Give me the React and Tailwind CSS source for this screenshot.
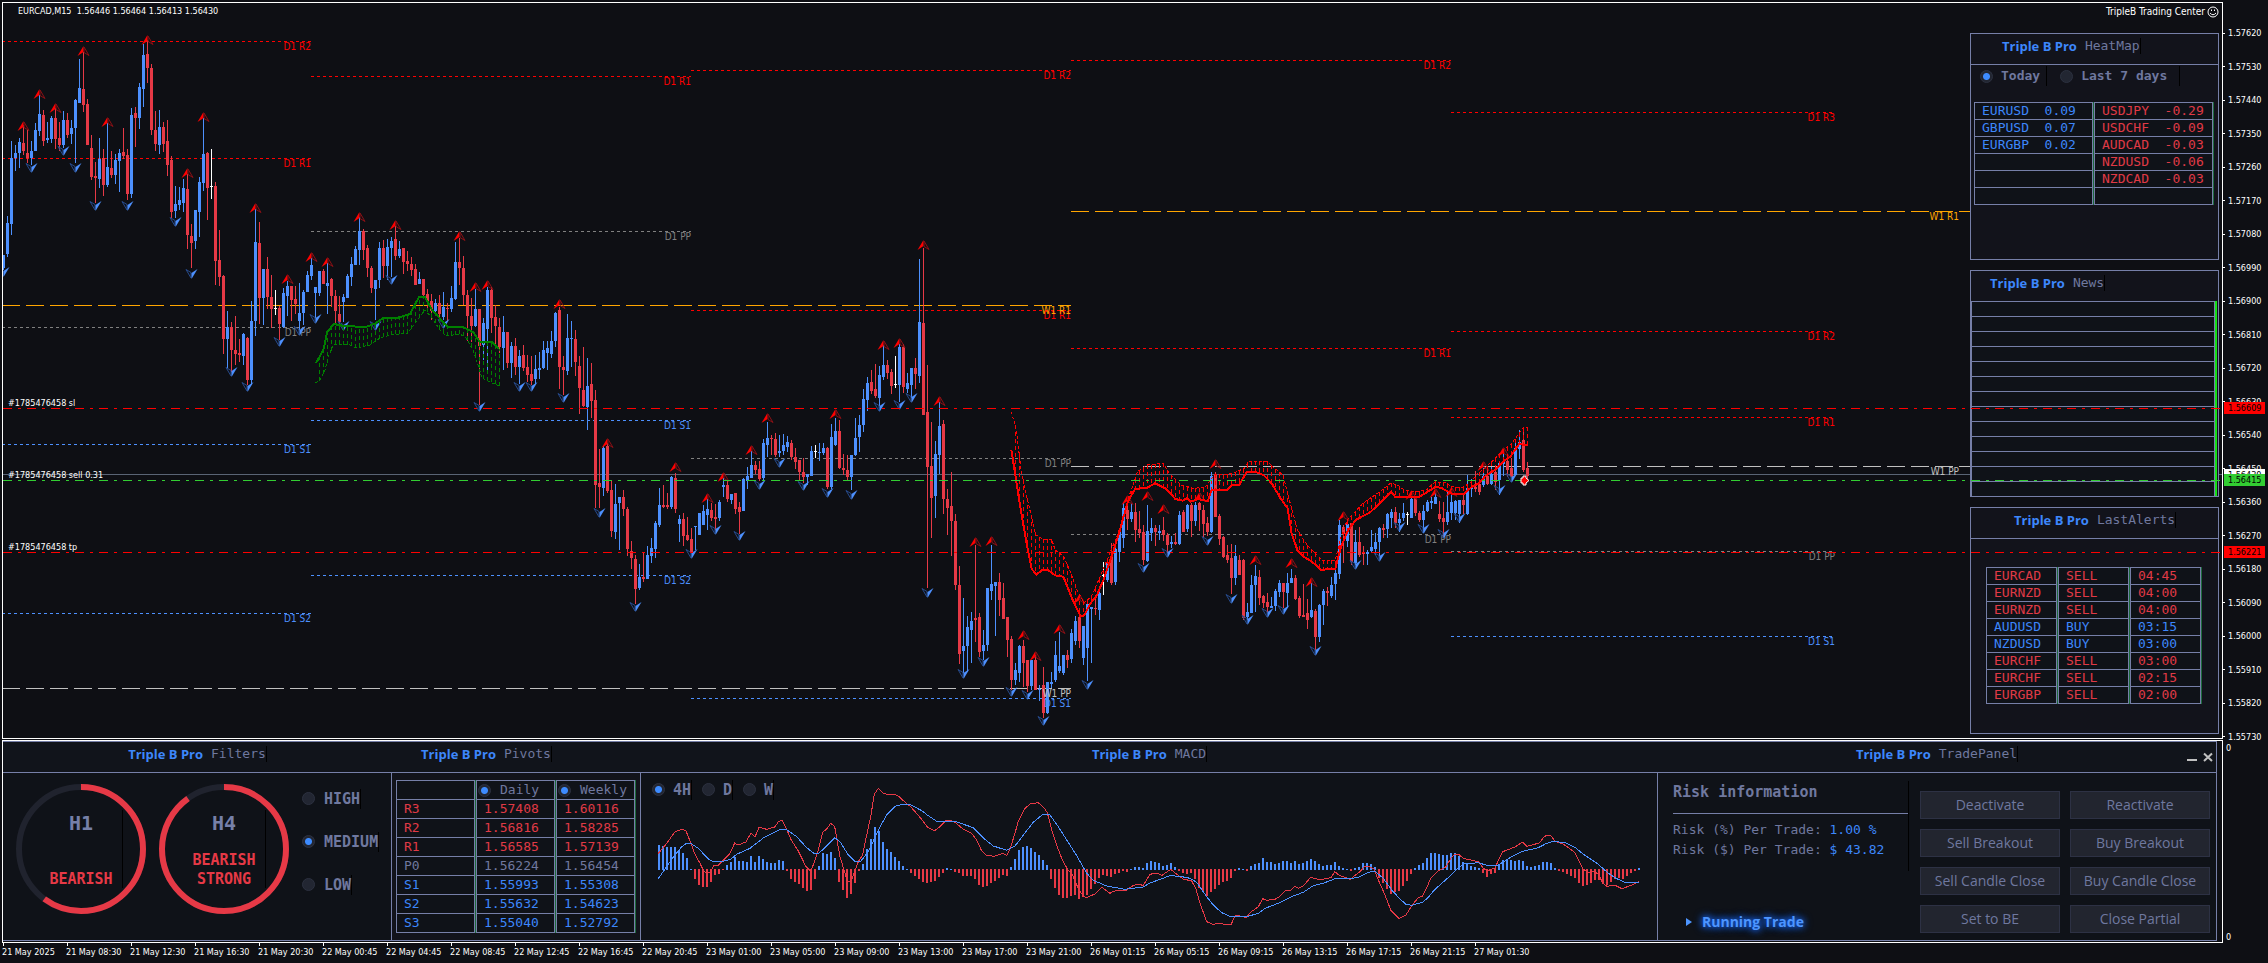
import React from "react";

const MONO = "font-['DejaVu_Sans_Mono',monospace]";
const TINY = "font-['DejaVu_Sans_Condensed','DejaVu_Sans',sans-serif] leading-3 text-white";

const BLUE = "#4d90fe";
const RED = "#e63946";

// direction, wick top, body top, body bottom, wick bottom
const CANDLES = `
u255,255,268,270 u216,223,254,257 u141,158,224,235 u145,153,158,171 u138,142,153,168 d125,143,151,155 d130,153,158,163 u141,151,158,165
u123,130,151,151 u95,114,131,136 d110,115,141,146 u122,138,140,143 u116,118,139,143 d108,118,139,149 d122,138,145,151 u111,120,145,148
d113,120,135,138 u120,128,134,144 u99,100,128,163 u59,88,103,103 d52,89,105,112 d99,104,145,145 d135,148,177,180 d162,176,178,203
u138,159,179,188 d149,158,185,196 u123,167,185,187 d151,168,175,178 u154,160,175,184 u149,153,161,192 d128,152,156,159 d149,155,194,200
u108,115,194,198 d107,113,118,147 u83,87,118,129 u44,55,89,107 d40,54,68,83 d64,68,130,135 d111,130,144,151 u110,127,145,154
d122,127,144,152 d120,141,165,176 d156,160,212,218 u186,204,211,218 u187,200,205,210 u179,188,203,212 d174,189,235,249 d224,236,243,268
u210,210,241,249 u177,182,212,237 u118,154,183,191 d152,153,188,220 w149,186,187,199 d182,186,261,285 d230,260,277,286 d275,276,339,354
u311,327,339,368 d322,327,350,372 d316,350,354,365 d339,353,355,362 u333,334,356,365 d337,338,380,385 u301,321,380,385 u209,242,321,336
d222,243,298,324 u269,269,298,325 d257,269,297,309 d275,297,309,328 w290,308,309,315 d306,308,324,340 u288,293,327,328 u281,286,296,316
d286,286,300,321 d286,299,304,314 u283,313,321,330 u290,292,313,325 u271,275,292,292 u258,265,276,280 u287,287,293,318 u271,271,293,296
d269,271,284,284 u263,283,286,314 d278,279,296,307 d290,296,311,323 d296,314,322,325 u294,297,302,322 u274,276,298,298 u257,264,277,286
u246,249,265,265 u217,231,250,265 d229,231,250,260 d245,248,268,277 d266,268,288,293 u280,280,289,320 u242,248,280,288 d240,248,266,278
u239,247,266,280 u237,241,248,277 d226,239,256,260 u241,249,256,258 d248,248,262,274 d251,261,264,271 d257,264,270,276 d264,269,285,285
u272,279,284,284 d279,279,295,296 d289,294,301,310 d294,301,311,320 u299,303,311,315 d295,303,314,321 u292,307,317,320 d303,308,309,321
u286,298,309,312 u242,262,299,300 d238,262,268,285 d256,268,295,305 d290,295,316,341 d298,316,326,342 u289,309,326,327 d309,309,346,405
u318,323,345,360 u287,290,329,370 d287,290,318,333 d305,317,326,347 d318,327,347,353 u316,332,348,370 d332,332,363,368 u342,346,363,378
d338,346,367,375 u350,356,367,384 d345,355,368,371 d355,367,375,382 d356,374,381,385 u355,369,379,384 u352,368,370,379 u341,350,368,369
u341,348,353,370 u331,341,354,358 u312,313,341,347 d307,310,367,389 d356,367,370,395 u314,338,371,375 u321,338,339,367 d330,339,362,376
d356,366,388,414 d347,390,406,407 u358,386,407,430 d363,384,401,418 d390,400,485,508 d449,483,487,508 u446,448,488,496 d443,446,491,493
d481,490,531,537 u484,504,532,539 u497,497,503,550 d490,497,509,516 d507,509,549,556 d541,551,558,569 d555,559,589,604 u564,577,588,590
d552,577,579,582 u546,555,579,579 u538,548,556,563 u521,523,549,558 u488,505,525,527 d485,505,507,508 d493,505,507,509 u476,477,507,509
d473,478,509,513 u515,519,524,542 d513,519,536,546 d517,535,540,541 d528,539,552,553 u526,526,527,550 u513,513,535,535 u505,511,525,525
u499,509,515,530 d503,510,518,521 d504,517,519,530 u500,502,518,521 u478,485,487,497 d480,485,499,502 u494,494,500,504 d493,493,509,514
d502,507,512,534 u478,479,511,511 u467,476,481,489 u451,465,478,478 d461,465,470,474 d461,469,479,481 u439,443,478,480 u422,438,445,457
d435,438,439,455 d433,439,455,457 u435,451,453,457 u434,445,451,455 u436,442,447,452 d440,443,457,460 d448,457,462,469 d460,460,472,480
d458,472,477,483 u474,474,477,485 u446,451,476,476 w445,451,452,458 u443,452,453,461 u443,448,453,455 d447,448,487,489 u424,437,487,489
u418,431,445,446 d420,431,468,469 d454,468,470,475 d455,470,477,480 u455,455,477,490 u418,438,455,456 u415,425,437,452 u389,399,425,432
u377,383,400,411 d370,382,391,394 d364,389,396,398 u366,375,398,406 u345,365,377,380 d360,365,373,379 d369,372,386,394 w356,384,385,388
u344,347,385,402 d344,347,387,393 u373,383,389,393 u368,368,385,398 d358,368,374,389 u259,322,376,383 d248,323,415,415 d365,412,467,588
d422,466,498,538 u441,454,496,518 u402,426,455,474 d420,424,499,514 d489,499,508,535 d472,506,521,556 d514,521,585,590 d566,585,654,664
u598,646,651,673 u616,627,646,672 u612,621,630,663 d545,618,620,642 d613,617,652,657 u630,645,651,660 u588,588,645,651 u545,584,591,600
u582,582,586,636 d573,582,600,616 d583,598,619,619 d617,617,640,657 d636,639,680,690 u663,670,680,685 u645,646,673,682 d640,646,663,687
d660,660,686,692 u660,660,686,690 d655,660,690,690 u685,689,690,701 d667,685,713,718 u682,682,713,714 u672,682,684,688 u641,655,680,682
u632,666,671,673 u655,655,673,675 d650,655,660,668 u629,633,659,663 u616,621,641,645 d612,617,641,648 u626,626,658,665 u600,604,648,681
u607,607,609,663 d595,608,609,615 u590,593,610,620 w562,575,576,595 u560,562,580,582 d543,557,583,585 u543,549,582,585 u530,531,552,562
u503,508,538,548 d505,510,519,530 u503,512,519,522 d503,512,530,542 d511,529,533,538 d525,532,560,565 u505,531,561,562 u518,528,533,541
d525,528,532,546 u525,531,533,540 d517,530,535,541 d533,535,545,553 u536,542,544,548 d533,542,544,545 u511,515,544,545 d510,512,532,532
u504,505,529,532 d503,505,521,537 u502,505,521,526 d502,503,510,531 d505,510,524,538 d517,523,532,536 u472,476,532,533 d472,475,517,517
d514,516,539,545 d536,537,557,558 d545,555,560,563 d544,558,578,594 u545,556,578,585 d555,560,575,575 d559,560,618,620 u603,612,617,620
u575,585,613,613 u565,576,585,612 d570,577,598,605 d595,596,603,608 d593,602,607,612 u597,606,608,608 u589,591,606,611 u580,583,592,597
d583,583,592,608 u573,583,593,608 u569,578,583,583 d575,578,599,600 d596,598,616,618 d584,615,617,617 d599,613,620,629 u583,610,617,618
d609,611,637,650 u604,605,637,642 u589,591,605,625 d587,591,593,606 u577,585,596,598 u570,573,584,600 u520,525,574,579 d525,527,534,563
u520,524,541,547 d523,523,562,565 u530,542,563,565 d527,542,555,557 d546,553,554,565 u550,552,554,565 u530,547,551,552 u533,542,549,555
u527,528,542,556 d524,528,530,538 u513,514,529,538 u509,512,518,528 d507,512,523,528 u513,519,523,532 u503,513,518,521 w512,514,515,525
u497,499,518,518 d496,497,513,516 d511,513,520,522 u505,511,520,533 u500,502,511,512 u497,501,503,509 u493,497,504,504 d501,514,519,522
d502,518,522,537 u492,512,522,525 u495,502,513,520 u500,501,513,520 u500,500,514,523 d495,500,505,514 u475,488,514,515 u479,488,489,497
d471,487,489,492 d480,484,492,495 u468,476,485,487 d470,476,484,485 u467,474,484,485 d465,472,482,490 u462,463,480,495 u453,462,464,476
d455,461,470,477 d458,468,477,477 u442,448,475,475 u430,442,449,459 d431,440,470,472 d462,468,476,480`
  .trim()
  .split(/\s+/)
  .map((c) => [c[0], ...c.slice(1).split(",").map(Number)]);

// candle index, tip of the marker
const HIGHS = [
  [5, 121], [9, 89], [13, 103], [20, 46], [26, 117], [36, 35], [46, 168], [50, 112], [63, 203], [71, 274], [77, 252], [81, 257],
  [89, 212], [98, 220], [114, 231], [118, 282], [121, 280], [139, 299], [151, 438], [168, 462], [176, 493], [180, 472], [187, 445],
  [191, 413], [208, 409], [220, 340], [224, 338], [230, 240], [234, 396], [243, 537], [247, 536], [255, 630], [258, 651], [264, 624],
  [269, 594], [281, 495], [286, 491], [290, 504], [299, 492], [303, 459], [313, 555], [322, 558], [327, 577], [335, 511], [352, 490],
  [358, 488], [362, 487], [370, 461], [375, 447],
];
const LOWS = [
  [0, 277], [7, 173], [15, 156], [18, 173], [23, 211], [31, 211], [43, 227], [47, 279], [57, 377], [61, 392], [69, 347], [74, 336],
  [78, 324], [85, 331], [93, 331], [97, 285], [110, 329], [119, 412], [129, 392], [132, 392], [140, 403], [149, 518], [158, 612],
  [172, 559], [178, 535], [184, 541], [189, 490], [194, 468], [200, 491], [206, 498], [212, 500], [219, 412], [224, 410], [227, 403],
  [231, 598], [240, 679], [245, 667], [252, 697], [256, 700], [260, 726], [271, 690], [285, 573], [291, 558], [301, 546], [307, 604],
  [311, 625], [316, 618], [320, 615], [328, 656], [338, 570], [344, 562], [349, 532], [355, 534], [360, 539], [364, 523], [374, 495],
  [377, 483],
];

const pairs = (s) => s.trim().split(/\s+/).map((p) => p.split(",").map(Number));
const place = (s, ox, oy, kx) => pairs(s).map(([x, y]) => [ox + x / kx, oy + y / 3]);
const toPoints = (pts) => pts.map(([x, y]) => `${x.toFixed(1)},${y.toFixed(1)}`).join(" ");
const valueAt = (pts, x) => {
  for (let i = 1; i < pts.length; i++) {
    const [x0, y0] = pts[i - 1];
    const [x1, y1] = pts[i];
    if (x >= x0 && x <= x1) return y0 + ((y1 - y0) * (x - x0)) / (x1 - x0 || 1);
  }
  return null;
};

const GREEN_LINE = pairs("316,363 320,356 324,348 327,332 334,324 344,326 366,327 376,323 383,318 397,318 410,314 419,297 425,297 432,310 448,327 463,327 473,332 480,342 492,342 499,349");
const GREEN_EDGE = pairs("315,383 320,380 325,370 329,355 334,344 350,345 356,348 370,345 380,338 390,335 408,333 419,318 425,310 432,318 440,330 446,336 460,334 466,338 473,350 478,365 482,378 490,382 499,386");
const RED_LINE = [
  ...place("725,150 732,215 742,310 755,420 767,508 777,523 790,509 800,510 815,526 832,530 850,595 868,650 876,645 888,610 900,590 915,540 935,455 950,385 965,305 980,267 1005,263 1021,250 1045,267 1063,297 1078,302 1088,294 1095,305 1110,297 1130,303 1138,270 1170,270 1180,256 1195,254 1210,217 1228,215 1245,225 1262,250 1280,295 1295,325 1303,400 1315,450 1330,472 1345,485 1363,509 1393,507 1405,440 1418,395 1435,360 1465,337 1485,310 1507,277", 660, 400, 2.063),
  ...place("211,577 220,591 275,590 295,575 312,561 325,563 350,581 378,582 395,562 412,550 430,525 450,510 470,483 485,470 505,433 526,435", 1300, 300, 2.306),
];
const RED_EDGE = [
  ...place("725,35 735,90 745,210 755,280 775,405 790,418 808,418 815,450 832,468 845,510 862,575 875,608 890,590 905,540 925,470 945,400 965,300 985,215 1005,195 1038,190 1050,220 1075,255 1100,265 1125,262 1145,222 1165,225 1190,215 1205,205 1215,184 1252,184 1268,205 1285,225 1300,310 1315,390 1335,435 1365,480 1393,482 1405,410 1418,360 1450,310 1490,270 1507,250", 660, 400, 2.063),
  ...place("212,550 225,555 240,570 262,575 290,570 312,545 335,548 350,560 375,563 395,545 410,520 430,500 450,475 468,450 487,433 505,400 515,382 526,382", 1300, 300, 2.306),
];

const R = "#ff0000";
const G = "#808080";
const B = "#4d90fe";
// x start, x end, y, colour, label
const DAILY = [
  [2, 311, 41, R, "D1 R2"], [2, 311, 158, R, "D1 R1"], [2, 311, 327, G, "D1 PP"], [2, 311, 444, B, "D1 S1"], [2, 311, 613, B, "D1 S2"],
  [311, 691, 76, R, "D1 R1"], [311, 691, 231, G, "D1 PP"], [311, 691, 420, B, "D1 S1"], [311, 691, 575, B, "D1 S2"],
  [691, 1071, 70, R, "D1 R2"], [691, 1071, 310, R, "D1 R1"], [691, 1071, 458, G, "D1 PP"], [691, 1071, 698, B, "D1 S1"],
  [1071, 1451, 60, R, "D1 R2"], [1071, 1451, 348, R, "D1 R1"], [1071, 1451, 534, G, "D1 PP"],
  [1451, 1835, 112, R, "D1 R3"], [1451, 1835, 331, R, "D1 R2"], [1451, 1835, 417, R, "D1 R1"], [1451, 1835, 551, G, "D1 PP"], [1451, 1835, 636, B, "D1 S1"],
];
const WEEKLY = [
  [2, 1071, 305, "#ffa500", "W1 R1", 1071], [2, 1071, 688, "#c0c0c0", "W1 PP", 1071],
  [1071, 1970, 211, "#ffa500", "W1 R1", 1959], [1071, 1970, 466, "#c0c0c0", "W1 PP", 1959],
];
const ORDERS = [
  [408, "#ff0000", "#1785476458 sl"], [480, "#32cd32", "#1785476458 sell 0.31"], [552, "#ff0000", "#1785476458 tp"],
];
const CONDENSED = "'DejaVu Sans Condensed','DejaVu Sans',sans-serif";

function Cloud({ line, edge, color }) {
  const bars = [];
  for (let x = 3; x < 1530; x += 4) {
    const a = valueAt(line, x);
    const b = valueAt(edge, x);
    if (a !== null && b !== null) bars.push([x, Math.round(a), Math.round(b)]);
  }
  return (
    <g stroke={color} fill="none">
      {bars.map(([x, a, b]) => (
        <line key={x} x1={x + 0.5} x2={x + 0.5} y1={b} y2={a} strokeDasharray="4 3" />
      ))}
      <polyline points={toPoints(edge)} strokeDasharray="3 2" />
      <polyline points={toPoints(line)} strokeWidth="2" />
    </g>
  );
}

function PriceChart() {
  return (
    <svg viewBox="3 3 2219 735" className="col-start-1 row-start-1 block w-full" role="img" aria-label="EURCAD M15 candles">
      <g shapeRendering="crispEdges">
        <line x1="3" x2="2222" y1="474.5" y2="474.5" stroke="#5a6475" />
        {DAILY.map(([a, b, y, c], i) => (
          <line key={i} x1={a} x2={b} y1={y + 0.5} y2={y + 0.5} stroke={c} strokeDasharray="3 3" />
        ))}
        {WEEKLY.map(([a, b, y, c], i) => (
          <line key={i} x1={a} x2={b} y1={y + 0.5} y2={y + 0.5} stroke={c} strokeDasharray="18 6" />
        ))}
      </g>
      <g shapeRendering="crispEdges">
        {CANDLES.map(([d, wt, bt, bb, wb], i) => {
          const x = 3 + 4 * i;
          const fill = d === "u" ? BLUE : d === "d" ? RED : "#ffffff";
          return (
            <g key={i} fill={fill}>
              <rect x={x} y={wt} width="1" height={Math.max(1, wb - wt)} />
              <rect x={x - 1} y={bt} width="3" height={Math.max(1, bb - bt)} />
            </g>
          );
        })}
      </g>
      <g fontFamily={CONDENSED} fontSize="10" textAnchor="end">
        {DAILY.map(([, b, y, c, t], i) => (
          <text key={i} x={b} y={y + 9} fill={c}>{t}</text>
        ))}
        {WEEKLY.map(([, , y, c, t, x], i) => (
          <text key={i} x={x} y={y + 9} fill={c}>{t}</text>
        ))}
      </g>
      {HIGHS.map(([i, y]) => (
        <g key={i} transform={`translate(${3.5 + 4 * i} ${y})`}>
          <path d="M0 0 L-6 10 L0 6 Z" fill="#ff0000" />
          <path d="M0.5 1 L5.5 9.5 L0.5 6.5 Z" fill="none" stroke="#8b1015" />
        </g>
      ))}
      {LOWS.map(([i, y]) => (
        <g key={i} transform={`translate(${3.5 + 4 * i} ${y})`}>
          <path d="M-0.5 -1 L-5.5 -9.5 L-0.5 -6.5 Z" fill="none" stroke="#264a8c" />
          <path d="M0 0 L6 -10 L0 -6 Z" fill={BLUE} />
        </g>
      ))}
      <g shapeRendering="crispEdges">
        <Cloud line={GREEN_LINE} edge={GREEN_EDGE} color="#008000" />
        <Cloud line={RED_LINE} edge={RED_EDGE} color="#ff0000" />
      </g>
      <text x="18" y="14" fill="#fff" fontFamily={CONDENSED} fontSize="9" xmlSpace="preserve">EURCAD,M15  1.56446 1.56464 1.56413 1.56430</text>
    </svg>
  );
}

function OrderLines() {
  return (
    <svg viewBox="3 3 2219 735" className="pointer-events-none col-start-1 row-start-1 block w-full" role="img" aria-label="Open order levels">
      {ORDERS.map(([y, c, t]) => (
        <g key={t}>
          <line x1="3" x2="2222" y1={y + 0.5} y2={y + 0.5} stroke={c} strokeDasharray="9 6 3 6" shapeRendering="crispEdges" />
          <text x="8" y={y - 2} fill="#fff" fontFamily={CONDENSED} fontSize="9">{t}</text>
        </g>
      ))}
      <path d="M1523 476 h3 v2 l3 2.500 l-3 2.500 v2 h-3 v-2 h-2 v-5 h2 z" fill="#ff0000" stroke="#fff" />
    </svg>
  );
}

function Title({ name, className = "" }) {
  return (
    <h2 className={`flex h-[30px] items-center pb-1.5 ${className}`}>
      <span className="mr-2 font-['Open_Sans',sans-serif] text-[13px] leading-4 font-bold text-[#3d87fb]">Triple B Pro</span>
      <span className={`${MONO} border-r border-black text-[13px] leading-4 text-[#6f789f]`}>{name}</span>
    </h2>
  );
}

function Dot({ label, labelClass, className = "", ...rest }) {
  return (
    <label className={`flex items-center ${MONO} text-[#6f789f] ${className}`}>
      <input
        {...rest}
        className="size-[13px] shrink-0 appearance-none rounded-full border border-[#2c3140] bg-[#222632] checked:bg-[radial-gradient(circle,#3d8bff_3px,#222632_4px)]"
      />
      <span className={labelClass}>{label}</span>
    </label>
  );
}

const CELL = "border-x border-b border-[#767fa8] p-0 text-left font-normal shadow-[1px_0_0_0_#1d6a3c] whitespace-pre";

function HeatMap() {
  const left = [["EURUSD", "0.09"], ["GBPUSD", "0.07"], ["EURGBP", "0.02"]];
  const right = [["USDJPY", "-0.29"], ["USDCHF", "-0.09"], ["AUDCAD", "-0.03"], ["NZDUSD", "-0.06"], ["NZDCAD", "-0.03"]];
  return (
    <section className="h-[227px] border border-[#767fa8] bg-[#12131b]">
      <Title name="HeatMap" className="pl-[31px]" />
      <div className="flex border-t border-[#767fa8] pt-px pl-[9px]">
        <Dot type="radio" name="heat" defaultChecked label="Today" labelClass="ml-2 border-r border-black pr-1.5 leading-5" className="text-[13px] font-bold" />
        <Dot type="radio" name="heat" label="Last 7 days" labelClass="ml-2 border-r border-black pr-3 leading-5" className="ml-[13px] text-[13px] font-bold" />
      </div>
      <table className={`mt-4 ml-[2px] table-fixed border-separate border-spacing-x-px border-spacing-y-0 bg-[#0f1218] ${MONO} text-[13px] leading-4`} aria-label="Strength">
        <tbody>
          {[0, 1, 2, 3, 4, 5].map((r) => (
            <tr key={r} className="h-[17px]">
              <td className={`${CELL} w-[119px] pl-[7px] text-[#3d87fb] ${r === 0 ? "border-t" : ""}`}>{left[r] ? `${left[r][0]}  ${left[r][1]}` : ""}</td>
              <td className={`${CELL} w-[119px] pl-[7px] text-[#e03a46] ${r === 0 ? "border-t" : ""}`}>{right[r] ? `${right[r][0]}  ${right[r][1]}` : ""}</td>
            </tr>
          ))}
        </tbody>
      </table>
    </section>
  );
}

function News() {
  return (
    <section className="h-[227px] border border-[#767fa8] bg-[#12131b]">
      <Title name="News" className="pl-[19px]" />
      <div className="pr-px">
        <div className="border-r-2 border-[#19e019]">
          <table className="w-full border-separate border-spacing-0 border-l border-[#767fa8] bg-[#0f1218]" aria-label="News">
            <tbody>
              {Array.from({ length: 13 }, (_, i) => (
                <tr key={i}>
                  <td className="h-[15px] border-t border-r border-[#767fa8] p-0" />
                </tr>
              ))}
            </tbody>
          </table>
        </div>
      </div>
    </section>
  );
}

function LastAlerts() {
  const rows = [
    ["EURCAD", "SELL", "04:45"], ["EURNZD", "SELL", "04:00"], ["EURNZD", "SELL", "04:00"], ["AUDUSD", "BUY", "03:15"],
    ["NZDUSD", "BUY", "03:00"], ["EURCHF", "SELL", "03:00"], ["EURCHF", "SELL", "02:15"], ["EURGBP", "SELL", "02:00"],
  ];
  return (
    <section className="h-[227px] border border-[#767fa8] bg-[#12131b]">
      <Title name="LastAlerts" className="pl-[43px]" />
      <div className="border-t border-[#767fa8] pt-7 pl-[14px]">
        <table className={`table-fixed border-separate border-spacing-x-px border-spacing-y-0 bg-[#0f1218] ${MONO} text-[13px] leading-4`} aria-label="Last alerts">
          <tbody>
            {rows.map((r, i) => (
              <tr key={i} className={r[1] === "BUY" ? "h-[17px] text-[#3d87fb]" : "h-[17px] text-[#e03a46]"}>
                {r.map((c, k) => (
                  <td key={k} className={`${CELL} w-[71px] pl-[7px] ${i === 0 ? "border-t" : ""}`}>{c}</td>
                ))}
              </tr>
            ))}
          </tbody>
        </table>
      </div>
    </section>
  );
}

const PRICES = Array.from({ length: 22 }, (_, i) => ((157620 - 90 * i) / 100000).toFixed(5));

function PriceAxis() {
  return (
    <div className={`relative -mb-1 flex w-[45px] shrink-0 flex-col justify-between pt-[25px] text-[9px] ${TINY}`}>
      {PRICES.map((p) => (
        <div key={p} className="flex h-3 items-center gap-[3px]">
          <span className="h-px w-[2px] bg-white" />
          {p}
        </div>
      ))}
      <span className="absolute top-[467px] left-px h-3 w-[41px] bg-white pl-1 text-black">1.56430</span>
      <span className="absolute top-[400px] left-px h-3 w-[41px] bg-[#ff0000] pl-1 text-black">1.56609</span>
      <span className="absolute top-[472px] left-px h-3 w-[41px] bg-[#32cd32] pl-1 text-black">1.56415</span>
      <span className="absolute top-[544px] left-px h-3 w-[41px] bg-[#ff0000] pl-1 text-black">1.56221</span>
    </div>
  );
}

function Ring({ frame, lines, share }) {
  const c = 2 * Math.PI * 62;
  return (
    <svg viewBox="0 0 130 130" className="size-[130px] shrink-0" role="img" aria-label={`${frame} ${lines.join(" ")}`}>
      <circle cx="65" cy="65" r="62" fill="none" stroke="#20232e" strokeWidth="6" />
      <circle cx="65" cy="65" r="62" fill="none" stroke={RED} strokeWidth="6" strokeDasharray={`${c * share} ${c}`} transform="rotate(-90 65 65)" />
      <rect x="106" y="26" width="1" height="78" fill="#000" />
      <g textAnchor="middle" fontWeight="700" fontFamily="'DejaVu Sans Mono',monospace">
        <text x="65" y="46" fontSize="20" fill="#7680a8">{frame}</text>
        {lines.map((t, i) => (
          <text key={t} x="65" y={100 - 19 * (lines.length - 1 - i)} fontSize="15" fill={RED}>{t}</text>
        ))}
      </g>
    </svg>
  );
}

function Filters() {
  return (
    <div className="flex gap-[13px] border-r border-[#767fa8] bg-[#0f1218] pl-[13px]">
      <div className="flex gap-[13px] pt-[11px]">
        <Ring frame="H1" lines={["BEARISH"]} share={0.6} />
        <Ring frame="H4" lines={["BEARISH", "STRONG"]} share={0.9} />
      </div>
      <div className="flex flex-col items-start pt-1">
        {["HIGH", "MEDIUM", "LOW"].map((t) => (
          <Dot key={t} type="radio" name="filter" defaultChecked={t === "MEDIUM"} label={t} labelClass="ml-[9px] border-r border-black leading-5" className="h-[43px] text-[15px] font-bold" />
        ))}
      </div>
    </div>
  );
}

const PIVOTS = [
  ["R3", "1.57408", "1.60116"], ["R2", "1.56816", "1.58285"], ["R1", "1.56585", "1.57139"], ["P0", "1.56224", "1.56454"],
  ["S1", "1.55993", "1.55308"], ["S2", "1.55632", "1.54623"], ["S3", "1.55040", "1.52792"],
];

function Pivots() {
  return (
    <div className="border-r border-[#767fa8] bg-[#12131b] pt-[7px] pl-[3px]">
      <table className={`table-fixed border-separate border-spacing-x-px border-spacing-y-0 bg-[#0f1218] ${MONO} text-[13px] leading-[18px]`}>
        <thead>
          <tr className="h-[19px]">
            <th className={`${CELL} w-[79px] border-t`} />
            {["Daily", "Weekly"].map((t) => (
              <th key={t} className={`${CELL} w-[79px] border-t`}>
                <Dot type="checkbox" defaultChecked label={t} labelClass="ml-[9px]" className="pl-px" />
              </th>
            ))}
          </tr>
        </thead>
        <tbody>
          {PIVOTS.map((r) => (
            <tr key={r[0]} className={r[0][0] === "R" ? "h-[19px] text-[#e03a46]" : r[0][0] === "S" ? "h-[19px] text-[#3d87fb]" : "h-[19px] text-[#6f789f]"}>
              {r.map((c, i) => (
                <td key={i} className={`${CELL} pl-[7px]`}>{c}</td>
              ))}
            </tr>
          ))}
        </tbody>
      </table>
    </div>
  );
}

// histogram bar ends in thirds of a pixel; the zero line is at 404
const HIST = `330 333 336 336 336 345 354 369 402 432 450 456 456 441 420 417 404 390 381 366 378 378 381 363 381 363 372 381 384 384 375 378
408 432 441 447 459 468 465 432 393 354 357 351 369 441 465 489 477 444 408 387 342 312 276 288 321 342 351 366 378 393 402 414 423 432 441
444 441 438 426 414 399 402 411 414 423 423 423 432 450 456 453 444 438 429 420 423 396 372 345 336 333 339 351 360 375 390 432 459 480 489
489 483 480 492 486 480 462 447 429 420 423 426 417 414 408 411 402 396 396 399 384 378 381 384 393 390 384 396 408 414 417 414 432 459 468
483 471 462 450 441 438 429 408 399 402 408 393 387 384 369 381 381 387 384 378 378 384 378 387 384 378 372 378 387 393 390 390 381 393 399
402 408 399 396 384 384 387 396 429 444 462 477 471 468 453 438 417 399 390 384 369 354 354 357 360 360 354 354 363 381 384 393 396 399 414
426 417 414 387 375 375 375 378 375 378 393 396 393 390 381 381 384 399 408 411 417 423 429 444 453 450 444 435 435 447 450 441 432 429 432
423 414 408 399`.trim().split(/\s+/).map(Number);

const MACD_LINE = "54,356 78,328 105,290 126,283 138,288 150,318 165,358 180,385 190,406 200,416 212,410 222,391 234,391 246,380 270,355 284,324 294,330 318,321 333,294 345,306 357,277 380,283 404,276 416,259 427,256 440,283 452,312 475,348 498,395 512,408 522,385 535,345 548,292 560,282 572,265 584,275 590,310 600,365 612,405 622,438 632,441 642,415 655,380 668,360 680,300 692,245 703,178 715,160 730,175 740,178 760,177 775,183 800,206 812,215 840,247 862,276 884,287 900,275 918,257 930,256 945,262 970,283 995,295 1010,315 1025,348 1038,361 1062,364 1088,355 1101,361 1112,335 1125,295 1135,258 1155,220 1172,206 1195,203 1212,218 1222,233 1235,285 1248,325 1265,370 1282,402 1297,418 1310,450 1322,473 1338,488 1365,477 1385,457 1410,475 1420,469 1440,466 1460,465 1475,454 1492,448 1510,451 1530,418 1550,414 1566,421 1592,403 1610,418 1630,432 1655,438 1667,460 1680,505 1700,560 1718,568 1740,565 1756,569 1773,569 1785,543 1798,542 1818,548 1833,531 1855,515 1868,491 1880,496 1905,493 1920,484 1935,468 1952,466 1964,454 1976,460 1990,453 2012,427 2040,434 2073,428 2084,410 2098,421 2130,433 2160,410 2173,395 2185,394 2202,402 2215,435 2235,480 2252,525 2277,551 2298,540 2315,512 2335,488 2348,483 2360,458 2373,428 2395,408 2418,395 2433,370 2445,357 2456,358 2470,370 2515,380 2530,400 2542,408 2555,402 2566,400 2575,375 2588,350 2625,336 2648,321 2660,334 2698,324 2710,308 2720,300 2732,301 2744,318 2770,327 2805,353 2818,380 2830,403 2846,412 2863,409 2875,418 2888,443 2900,454 2925,451 2946,461 2975,450 2998,440";
const SIGNAL_LINE = "54,432 75,402 100,366 125,335 140,325 152,325 175,340 205,372 220,380 250,379 272,373 290,358 330,340 370,309 420,284 440,284 470,305 500,338 524,357 535,356 560,333 584,308 600,320 625,360 645,380 662,379 685,350 700,318 720,275 740,240 765,214 790,208 812,209 845,227 862,240 890,259 945,259 1000,278 1030,309 1060,333 1100,346 1125,333 1150,300 1180,262 1210,237 1230,240 1255,275 1280,315 1310,362 1340,415 1360,436 1400,453 1455,463 1510,456 1530,444 1590,422 1620,424 1650,430 1670,442 1700,485 1720,510 1745,533 1770,544 1820,545 1855,535 1875,520 1915,505 1960,483 1990,472 2020,452 2050,445 2085,431 2130,431 2158,426 2185,412 2205,409 2230,430 2255,465 2280,492 2298,508 2315,511 2335,505 2348,502 2365,487 2385,463 2420,432 2448,405 2470,387 2515,383 2540,391 2575,390 2610,368 2648,349 2695,338 2720,325 2740,319 2775,323 2805,337 2830,358 2875,388 2905,415 2930,431 2958,443 2985,444 2998,441";

function Macd() {
  return (
    <div className="grid border-r border-[#767fa8] bg-[#0f1218]">
      <svg viewBox="641 773 1016 167" className="col-start-1 row-start-1 h-[167px] w-full" role="img" aria-label="MACD" shapeRendering="crispEdges">
        {HIST.map((v, k) => {
          const up = v < 404;
          const h = Math.round(Math.abs(404 - v) / 3);
          return <rect key={k} x={658 + 4 * k} y={up ? 870 - h : 869} width="2" height={up ? h : h + 1} fill={up ? BLUE : RED} />;
        })}
        <polyline points={toPoints(place(MACD_LINE, 640, 735, 3))} fill="none" stroke={RED} />
        <polyline points={toPoints(place(SIGNAL_LINE, 640, 735, 3))} fill="none" stroke={BLUE} />
      </svg>
      <div className="col-start-1 row-start-1 flex h-[33px] items-center gap-[10px] self-start pl-[11px]">
        {["4H", "D", "W"].map((t) => (
          <Dot key={t} type="radio" name="macd" defaultChecked={t === "4H"} label={t} labelClass="ml-2 border-r border-black leading-5" className="text-[15px] font-bold" />
        ))}
      </div>
    </div>
  );
}

const ACTIONS = ["Deactivate", "Reactivate", "Sell Breakout", "Buy Breakout", "Sell Candle Close", "Buy Candle Close", "Set to BE", "Close Partial"];

function TradePanel() {
  return (
    <div className="flex bg-[#0f1218] pr-[6px]">
      <div className={`flex flex-1 flex-col pt-2 pl-[15px] ${MONO} text-[13px] leading-5 text-[#6f789f]`}>
        <div className="h-[90px] border-r border-black">
          <h3 className="h-[33px] border-b border-[#767fa8] text-[15px] leading-[22px] font-bold">Risk information</h3>
          <p className="mt-1.5 whitespace-pre">Risk (%) Per Trade: <b className="font-normal text-[#3d87fb]">1.00 %</b></p>
          <p className="whitespace-pre">Risk ($) Per Trade: <b className="font-normal text-[#3d87fb]">$ 43.82</b></p>
        </div>
        <div className="mt-auto mb-2 flex items-center gap-[10px] pl-[13px] font-['Open_Sans',sans-serif] text-[14px] font-bold text-[#4d95ff] [text-shadow:0_0_6px_#1668ff,0_0_10px_#1668ff]">
          <svg viewBox="0 0 6 8" className="h-2 w-1.5" aria-hidden="true"><path d="M0 0 L6 4 L0 8 Z" fill="#4d95ff" /></svg>
          Running Trade
        </div>
      </div>
      <div className="ml-[11px] grid grid-cols-[140px_140px] content-start gap-[10px] pt-[18px]">
        {ACTIONS.map((a) => (
          <button key={a} type="button" className="h-7 border border-[#2d3144] bg-[#22252f] font-['Open_Sans',sans-serif] text-[14px] leading-5 text-[#6f789f]">{a}</button>
        ))}
      </div>
    </div>
  );
}

const TIMES = [
  "21 May 2025", "21 May 08:30", "21 May 12:30", "21 May 16:30", "21 May 20:30", "22 May 00:45", "22 May 04:45", "22 May 08:45",
  "22 May 12:45", "22 May 16:45", "22 May 20:45", "23 May 01:00", "23 May 05:00", "23 May 09:00", "23 May 13:00", "23 May 17:00",
  "23 May 21:00", "26 May 01:15", "26 May 05:15", "26 May 09:15", "26 May 13:15", "26 May 17:15", "26 May 21:15", "27 May 01:30",
];

export default function App() {
  const cols = "grid grid-cols-[389px_249px_1fr_558px]";
  return (
    <main className="min-h-screen overflow-hidden bg-[#0e0f14] pt-0.5 pl-0.5">
      <div className="flex">
        <section className="grid min-w-0 flex-1 border border-white">
          <PriceChart />
          <aside className="col-start-1 row-start-1 mr-[3px] flex w-[249px] flex-col gap-[10px] justify-self-end">
            <div className={`-mb-[10px] flex h-[30px] items-start justify-end gap-0.5 pt-[3px] text-[10px] ${TINY}`}>
              TripleB Trading Center
              <svg viewBox="0 0 12 12" className="size-3" fill="none" stroke="#fff" aria-hidden="true">
                <circle cx="6" cy="6" r="5" />
                <path d="M3 7 Q6 10.500 9 7" />
                <path d="M4.500 3.500 v1.500 M7.500 3.500 v1.500" />
              </svg>
            </div>
            <HeatMap />
            <News />
            <LastAlerts />
          </aside>
          <OrderLines />
        </section>
        <PriceAxis />
      </div>

      <div className="mt-px flex">
        <section className="min-w-0 flex-1 border border-white pr-[5px] pb-px">
          <div className="border-y border-r border-[#767fa8]">
            <header className={`${cols} border-b border-[#767fa8] bg-[#11141b]`}>
              <Title name="Filters" className="justify-center" />
              <Title name="Pivots" className="justify-center pr-[60px]" />
              <Title name="MACD" className="justify-center" />
              <div className="grid">
                <Title name="TradePanel" className="col-start-1 row-start-1 justify-center" />
                <div className="col-start-1 row-start-1 flex items-center gap-1 justify-self-end pr-0.5 text-[#c0c0c0]">
                  <button type="button" aria-label="Minimise" className="size-3">
                    <svg viewBox="0 0 12 12" stroke="currentColor" strokeWidth="2"><path d="M1 9 H11" /></svg>
                  </button>
                  <button type="button" aria-label="Close" className="size-3">
                    <svg viewBox="0 0 12 12" stroke="currentColor" strokeWidth="2"><path d="M2 2.500 L10 10 M10 2.500 L2 10" /></svg>
                  </button>
                </div>
              </div>
            </header>
            <div className={`${cols} h-[167px]`}>
              <Filters />
              <Pivots />
              <Macd />
              <TradePanel />
            </div>
          </div>
        </section>
        <div className={`flex w-[45px] shrink-0 flex-col justify-between pt-0.5 pl-[3px] text-[9px] ${TINY}`}>
          <span>0</span>
          <span>0</span>
        </div>
      </div>

      <div className={`flex text-[9px] ${TINY}`}>
        {TIMES.map((t) => (
          <div key={t} className="w-16 shrink-0 whitespace-nowrap">
            <span className="ml-px block h-[3px] w-px bg-white" />
            {t}
          </div>
        ))}
      </div>
    </main>
  );
}
